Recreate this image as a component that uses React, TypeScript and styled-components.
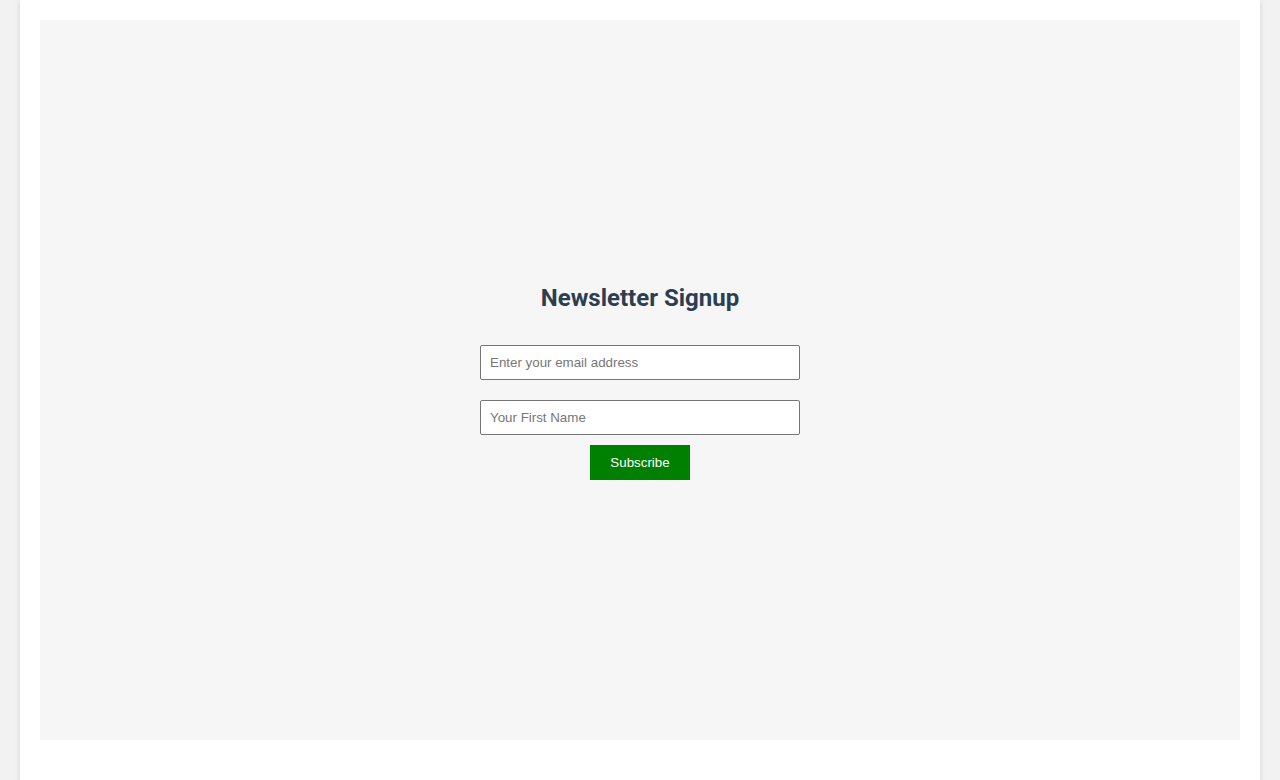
import React from "react";
import styled, { createGlobalStyle } from "styled-components";

const Global = createGlobalStyle`
  html, body { margin: 0; padding: 0; background: #f2f2f2; }
  body { font-family: "Liberation Sans", Arial, sans-serif; }
  * { box-sizing: border-box; }
`;

const Page = styled.div`
  width: 1240px;
  margin: 0 20px;
  background: #ffffff;
  box-shadow: 0 0 6px rgba(0, 0, 0, 0.12);
  padding: 20px 20px 60px;
`;

const Panel = styled.section`
  height: 720px;
  padding-top: 4px;
  background: #f6f6f6;
  display: flex;
  flex-direction: column;
  align-items: center;
  justify-content: center;
`;

const Title = styled.h2`
  margin: 0 0 34px;
  font-family: Roboto, "Liberation Sans", sans-serif;
  font-weight: 700;
  font-size: 24px;
  line-height: 26px;
  color: #2c3e50;
`;

const Form = styled.form`
  display: flex;
  flex-direction: column;
  align-items: center;
`;

const Input = styled.input<{ $gap: number }>`
  width: 320px;
  height: 35px;
  padding: 0 9px;
  border: 1px solid #767676;
  border-radius: 2px;
  background: #fff;
  font-family: "Liberation Sans", Arial, sans-serif;
  font-size: 13.33px;
  margin-bottom: ${(p) => p.$gap}px;
  &::placeholder { color: #777; }
`;

const Button = styled.button`
  width: 100px;
  height: 35px;
  border: none;
  background: #008000;
  color: #fff;
  font-family: "Liberation Sans", Arial, sans-serif;
  font-size: 13.33px;
  cursor: pointer;
`;

export default function App() {
  return (
    <>
      <Global />
      <Page>
        <Panel>
          <Title>Newsletter Signup</Title>
          <Form onSubmit={(e) => e.preventDefault()}>
            <Input $gap={20} type="email" placeholder="Enter your email address" />
            <Input $gap={10} type="text" placeholder="Your First Name" />
            <Button type="submit">Subscribe</Button>
          </Form>
        </Panel>
      </Page>
    </>
  );
}
